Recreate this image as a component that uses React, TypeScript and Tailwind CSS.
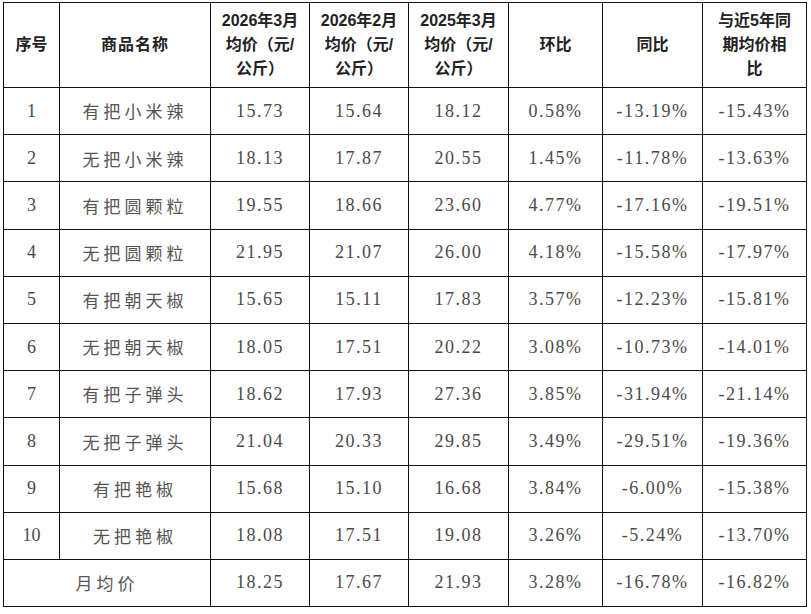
import React from "react";

const rows: [string, string, string, string, string, string, string, string][] = [
  ["1", "有把小米辣", "15.73", "15.64", "18.12", "0.58%", "-13.19%", "-15.43%"],
  ["2", "无把小米辣", "18.13", "17.87", "20.55", "1.45%", "-11.78%", "-13.63%"],
  ["3", "有把圆颗粒", "19.55", "18.66", "23.60", "4.77%", "-17.16%", "-19.51%"],
  ["4", "无把圆颗粒", "21.95", "21.07", "26.00", "4.18%", "-15.58%", "-17.97%"],
  ["5", "有把朝天椒", "15.65", "15.11", "17.83", "3.57%", "-12.23%", "-15.81%"],
  ["6", "无把朝天椒", "18.05", "17.51", "20.22", "3.08%", "-10.73%", "-14.01%"],
  ["7", "有把子弹头", "18.62", "17.93", "27.36", "3.85%", "-31.94%", "-21.14%"],
  ["8", "无把子弹头", "21.04", "20.33", "29.85", "3.49%", "-29.51%", "-19.36%"],
  ["9", "有把艳椒", "15.68", "15.10", "16.68", "3.84%", "-6.00%", "-15.38%"],
  ["10", "无把艳椒", "18.08", "17.51", "19.08", "3.26%", "-5.24%", "-13.70%"],
];

const cell = "border border-[#111] text-center align-middle p-0";
const num = "font-['Liberation_Serif','Noto_Sans_CJK_SC',serif] text-[18px] tracking-[1.5px] text-[#4a4a4a]";
const cjk = "font-['Noto_Sans_CJK_SC',sans-serif] text-[17px] tracking-[4px] text-[#555]";
const head =
  "font-['Liberation_Sans','Noto_Sans_CJK_SC',sans-serif] font-bold text-[16px] leading-[24px] text-[#222]";

export default function App() {
  return (
    <div className="bg-white w-[811px] h-[614px] pl-[3px] pt-[2px]">
      <table className="border-collapse table-fixed w-[804px]">
        <colgroup>
          <col className="w-[56px]" />
          <col className="w-[151px]" />
          <col className="w-[99px]" />
          <col className="w-[99px]" />
          <col className="w-[100px]" />
          <col className="w-[94px]" />
          <col className="w-[100px]" />
          <col className="w-[104px]" />
        </colgroup>
        <thead>
          <tr className="h-[85px]">
            <th className={`${cell} ${head}`}>序号</th>
            <th className={`${cell} ${head}`}>
              <span className="tracking-[1px]">商品名称</span>
            </th>
            <th className={`${cell} ${head}`}>
              2026年3月
              <br />
              均价（元/
              <br />
              公斤）
            </th>
            <th className={`${cell} ${head}`}>
              2026年2月
              <br />
              均价（元/
              <br />
              公斤）
            </th>
            <th className={`${cell} ${head}`}>
              2025年3月
              <br />
              均价（元/
              <br />
              公斤）
            </th>
            <th className={`${cell} ${head}`}>环比</th>
            <th className={`${cell} ${head}`}>同比</th>
            <th className={`${cell} ${head}`}>
              与近5年同
              <br />
              期均价相
              <br />
              比
            </th>
          </tr>
        </thead>
        <tbody>
          {rows.map((r) => (
            <tr key={r[0]} className="h-[47.2px]">
              <td className={`${cell} ${num} tracking-normal`}>{r[0]}</td>
              <td className={`${cell} ${cjk}`}>{r[1]}</td>
              <td className={`${cell} ${num}`}>{r[2]}</td>
              <td className={`${cell} ${num}`}>{r[3]}</td>
              <td className={`${cell} ${num}`}>{r[4]}</td>
              <td className={`${cell} ${num}`}>{r[5]}</td>
              <td className={`${cell} ${num}`}>{r[6]}</td>
              <td className={`${cell} ${num}`}>{r[7]}</td>
            </tr>
          ))}
          <tr className="h-[47.2px]">
            <td colSpan={2} className={`${cell} ${cjk}`}>
              月均价
            </td>
            <td className={`${cell} ${num}`}>18.25</td>
            <td className={`${cell} ${num}`}>17.67</td>
            <td className={`${cell} ${num}`}>21.93</td>
            <td className={`${cell} ${num}`}>3.28%</td>
            <td className={`${cell} ${num}`}>-16.78%</td>
            <td className={`${cell} ${num}`}>-16.82%</td>
          </tr>
        </tbody>
      </table>
    </div>
  );
}
